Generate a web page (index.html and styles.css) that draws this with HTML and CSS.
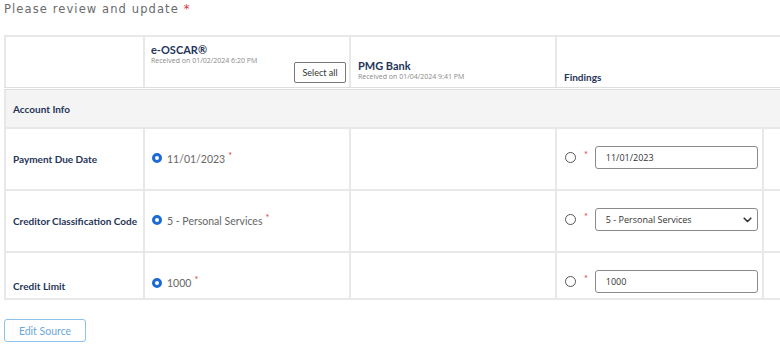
FILE: index.html
```html
<!DOCTYPE html>
<html lang="en">
<head>
  <meta charset="UTF-8">
  <meta name="viewport" content="width=device-width, initial-scale=1.0">
  <title>Review and update</title>
  <link rel="stylesheet" href="styles.css">
</head>
<body>
  <div class="page">
    <p class="intro">Please review and update <span class="req">*</span></p>

    <div class="table-wrap">
      <table class="review">
        <colgroup>
          <col class="c-label">
          <col class="c-source">
          <col class="c-source">
          <col class="c-find">
          <col class="c-extra">
        </colgroup>
        <thead>
          <tr>
            <th></th>
            <th class="src-head">
              <div class="src-top">
                <div class="src-name">e-OSCAR®</div>
                <div class="src-date">Received on 01/02/2024 6:20 PM</div>
              </div>
              <div class="src-bottom"><button class="btn-outline">Select all</button></div>
            </th>
            <th class="bottom-head">
              <div class="src-name">PMG Bank</div>
              <div class="src-date">Received on 01/04/2024 9:41 PM</div>
            </th>
            <th class="bottom-head find-head" colspan="2">Findings</th>
          </tr>
        </thead>
        <tbody>
          <tr class="group">
            <td colspan="5">Account Info</td>
          </tr>
          <tr class="field">
            <td class="label">Payment Due Date</td>
            <td><span class="radio on"></span><span class="val">11/01/2023</span><span class="req sup">*</span></td>
            <td></td>
            <td>
              <div class="find">
                <span class="radio"></span><span class="req sup">*</span>
                <input class="box" type="text" value="11/01/2023">
              </div>
            </td>
            <td></td>
          </tr>
          <tr class="field">
            <td class="label">Creditor Classification Code</td>
            <td><span class="radio on"></span><span class="val">5 - Personal Services</span><span class="req sup">*</span></td>
            <td></td>
            <td>
              <div class="find">
                <span class="radio"></span><span class="req sup">*</span>
                <div class="select-wrap">
                  <select class="box">
                    <option>5 - Personal Services</option>
                  </select>
                  <svg class="chev" width="9" height="6" viewBox="0 0 9 6"><path d="M1.2 1.2 L4.5 4.5 L7.8 1.2" fill="none" stroke="#333" stroke-width="1.6" stroke-linecap="round" stroke-linejoin="round"/></svg>
                </div>
              </div>
            </td>
            <td></td>
          </tr>
          <tr class="field last">
            <td class="label">Credit Limit</td>
            <td><span class="radio on"></span><span class="val">1000</span><span class="req sup">*</span></td>
            <td></td>
            <td>
              <div class="find">
                <span class="radio"></span><span class="req sup">*</span>
                <input class="box" type="text" value="1000">
              </div>
            </td>
            <td></td>
          </tr>
        </tbody>
      </table>
    </div>

    <button class="btn-edit">Edit Source</button>
  </div>
</body>
</html>
```

FILE: styles.css
```css
body {
  margin: 0;
  background: #fff;
  font-family: Lato, "Open Sans", sans-serif;
  overflow: hidden;
}
.page {
  padding: 2px 0 0 4px;
}
.intro {
  margin: 0;
  font-family: "DejaVu Sans", sans-serif;
  font-size: 11.5px;
  color: #6b6b6b;
  letter-spacing: 1.1px;
}
.req {
  color: #d9343a;
}
.table-wrap {
  margin-top: 19px;
  overflow: hidden;
}
.review {
  border-collapse: collapse;
  table-layout: fixed;
  width: 840px;
}
.c-label { width: 139px; }
.c-source { width: 206px; }
.c-find { width: 207px; }
.c-extra { width: 82px; }
.review th,
.review td {
  border: 2px solid #e8e8e8;
  padding: 0;
  text-align: left;
}
.review thead th {
  height: 44px;
  border-bottom: 3px double #dedede;
  vertical-align: bottom;
}
.src-name {
  font-family: Lato, sans-serif;
  font-size: 11px;
  font-weight: 700;
  color: #1f3559;
}
.src-date {
  font-family: "Open Sans", sans-serif;
  font-size: 7px;
  font-weight: 400;
  color: #8a8a8a;
}
.src-head {
  padding: 0;
}
.src-top {
  padding: 0 0 0 6px;
  height: 19px;
}
.src-bottom {
  display: flex;
  justify-content: flex-end;
  padding: 0 3px 4px 0;
}
.btn-outline {
  font-family: Lato, sans-serif;
  font-size: 9px;
  color: #333;
  background: #fff;
  border: 1px solid #777;
  border-radius: 2px;
  height: 21px;
  width: 52px;
  padding: 0;
}
.bottom-head {
  padding: 0 0 6px 7px !important;
}
.find-head {
  font-family: Lato, sans-serif;
  font-size: 10px;
  font-weight: 700;
  color: #1f3559;
  padding-bottom: 4px !important;
}
.group td {
  height: 37px;
  background: #f4f4f4;
  padding-left: 7px;
  font-family: Lato, sans-serif;
  font-size: 10px;
  font-weight: 700;
  color: #1f3559;
}
.field td {
  height: 60px;
  vertical-align: middle;
  padding-left: 7px;
}
.field.last td {
  height: 25px;
  padding-top: 16px;
}
.label {
  font-family: Lato, sans-serif;
  font-size: 10px;
  font-weight: 700;
  color: #1f3559;
  white-space: nowrap;
}
.field.last .label {
  padding-top: 20px;
}
.radio {
  display: inline-block;
  width: 10px;
  height: 10px;
  box-sizing: border-box;
  border-radius: 50%;
  border: 1.5px solid #555;
  vertical-align: middle;
}
.radio.on {
  border: 3px solid #1d6ad6;
  margin-right: 5px;
  position: relative;
  top: -3px;
}
.val {
  font-size: 10.5px;
  color: #666;
  position: relative;
  top: -3px;
}
.sup {
  font-size: 9px;
  margin-left: 3px;
  position: relative;
  top: -7px;
}
.find {
  display: flex;
  align-items: center;
  padding-left: 1px;
  margin-bottom: 4px;
}
.find .radio {
  width: 11px;
  height: 11px;
  margin-right: 5px;
}
.find .sup {
  top: -3px;
  margin-right: 7px;
}
.box {
  box-sizing: border-box;
  width: 163px;
  height: 23px;
  border: 1px solid #8a8a8a;
  border-radius: 3px;
  padding: 0 0 0 10px;
  font-family: "Open Sans", sans-serif;
  font-size: 9px;
  color: #333;
  background: #fff;
}
.select-wrap {
  position: relative;
}
.select-wrap select {
  appearance: none;
  -webkit-appearance: none;
  display: block;
}
.chev {
  position: absolute;
  right: 6px;
  top: 9px;
}
.btn-edit {
  margin-top: 19px;
  width: 82px;
  height: 23px;
  background: #fff;
  border: 1.5px solid #8cc2ee;
  border-radius: 3px;
  color: #6aa6dc;
  font-family: Lato, sans-serif;
  font-size: 10.5px;
  padding: 0;
}
```
